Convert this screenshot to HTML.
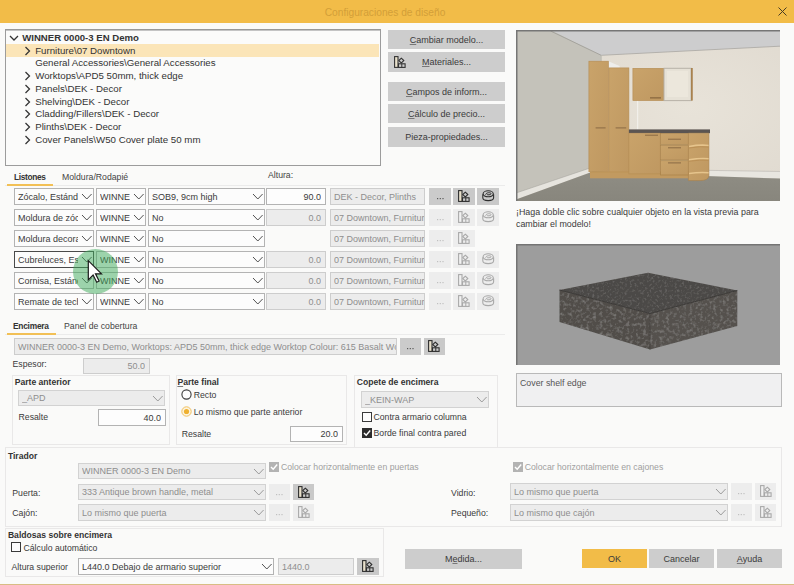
<!DOCTYPE html><html><head><meta charset="utf-8"><style>
html,body{margin:0;padding:0;}
body{width:794px;height:585px;position:relative;overflow:hidden;background:#fafaf9;font-family:"Liberation Sans", sans-serif;}
u{text-decoration:underline;text-decoration-color:#777;text-underline-offset:0.8px;text-decoration-thickness:1px;}
</style></head><body>
<div style="position:absolute;left:0px;top:0px;width:794px;height:23px;box-sizing:border-box;background:#f2bc48;"></div>
<div style="position:absolute;left:324.7px;top:7.06px;line-height:11.73px;font-size:10.2px;font-weight:normal;color:#d39f38;white-space:nowrap;">Configuraciones de diseño</div>
<svg style="position:absolute;left:777.5px;top:6.5px" width="9" height="9"><path d="M0.5 0.5 L8.5 8.5 M8.5 0.5 L0.5 8.5" stroke="#4a3d22" stroke-width="1"/></svg>
<div style="position:absolute;left:5px;top:29px;width:376px;height:137px;box-sizing:border-box;background:#fbfbfa;border:1px solid #9c9c9c;border-top:1px solid #999;box-shadow:inset 0 1px 0 #c4c4c4;"></div>
<div style="position:absolute;left:6px;top:44px;width:373px;height:12.5px;box-sizing:border-box;background:#fbe5b8;"></div>
<div style="position:absolute;left:22.2px;top:32.11px;line-height:11.04px;font-size:9.6px;font-weight:bold;color:#333;white-space:nowrap;">WINNER 0000-3 EN Demo</div>
<svg style="position:absolute;left:9px;top:34.5px" width="11" height="7"><polyline points="1,1 5,5 9,1" fill="none" stroke="#333" stroke-width="1.25"/></svg>
<div style="position:absolute;left:35.2px;top:44.72px;line-height:11.15px;font-size:9.7px;font-weight:normal;color:#333;white-space:nowrap;">Furniture\07 Downtown</div>
<svg style="position:absolute;left:24px;top:45.7px" width="8" height="10"><polyline points="1.5,1 5.5,5 1.5,9" fill="none" stroke="#333" stroke-width="1.25"/></svg>
<div style="position:absolute;left:35.2px;top:57.42px;line-height:11.15px;font-size:9.7px;font-weight:normal;color:#333;white-space:nowrap;">General Accessories\General Accessories</div>
<div style="position:absolute;left:35.2px;top:70.12px;line-height:11.15px;font-size:9.7px;font-weight:normal;color:#333;white-space:nowrap;">Worktops\APD5 50mm, thick edge</div>
<svg style="position:absolute;left:24px;top:71.1px" width="8" height="10"><polyline points="1.5,1 5.5,5 1.5,9" fill="none" stroke="#333" stroke-width="1.25"/></svg>
<div style="position:absolute;left:35.2px;top:82.82px;line-height:11.15px;font-size:9.7px;font-weight:normal;color:#333;white-space:nowrap;">Panels\DEK - Decor</div>
<svg style="position:absolute;left:24px;top:83.8px" width="8" height="10"><polyline points="1.5,1 5.5,5 1.5,9" fill="none" stroke="#333" stroke-width="1.25"/></svg>
<div style="position:absolute;left:35.2px;top:95.52px;line-height:11.15px;font-size:9.7px;font-weight:normal;color:#333;white-space:nowrap;">Shelving\DEK - Decor</div>
<svg style="position:absolute;left:24px;top:96.5px" width="8" height="10"><polyline points="1.5,1 5.5,5 1.5,9" fill="none" stroke="#333" stroke-width="1.25"/></svg>
<div style="position:absolute;left:35.2px;top:108.22px;line-height:11.15px;font-size:9.7px;font-weight:normal;color:#333;white-space:nowrap;">Cladding/Fillers\DEK - Decor</div>
<svg style="position:absolute;left:24px;top:109.2px" width="8" height="10"><polyline points="1.5,1 5.5,5 1.5,9" fill="none" stroke="#333" stroke-width="1.25"/></svg>
<div style="position:absolute;left:35.2px;top:120.92px;line-height:11.15px;font-size:9.7px;font-weight:normal;color:#333;white-space:nowrap;">Plinths\DEK - Decor</div>
<svg style="position:absolute;left:24px;top:121.9px" width="8" height="10"><polyline points="1.5,1 5.5,5 1.5,9" fill="none" stroke="#333" stroke-width="1.25"/></svg>
<div style="position:absolute;left:35.2px;top:133.62px;line-height:11.15px;font-size:9.7px;font-weight:normal;color:#333;white-space:nowrap;">Cover Panels\W50 Cover plate 50 mm</div>
<svg style="position:absolute;left:24px;top:134.6px" width="8" height="10"><polyline points="1.5,1 5.5,5 1.5,9" fill="none" stroke="#333" stroke-width="1.25"/></svg>
<div style="position:absolute;left:388px;top:30px;width:117px;height:19px;box-sizing:border-box;background:#cdcdcd;"></div>
<div style="position:absolute;left:388px;width:117px;text-align:center;top:34.59px;line-height:10.35px;font-size:9px;font-weight:normal;color:#3b3b3b;white-space:nowrap;"><u>C</u>ambiar modelo...</div>
<div style="position:absolute;left:388px;top:52px;width:117px;height:20px;box-sizing:border-box;background:#cdcdcd;"></div>
<div style="position:absolute;left:388px;width:117px;text-align:center;top:57.09px;line-height:10.35px;font-size:9px;font-weight:normal;color:#3b3b3b;white-space:nowrap;"><u>M</u>ateriales...</div>
<svg style="position:absolute;left:394px;top:55.5px" width="13" height="13" viewBox="0 0 13 13">
<rect x="0.6" y="0.6" width="3.4" height="10.8" fill="#eae2cc" stroke="#333" stroke-width="1.1"/>
<path d="M7.3 2.2 L9.8 4.6 L7.3 7 L4.8 4.6 Z" fill="none" stroke="#333" stroke-width="1.1"/>
<rect x="4.5" y="7.8" width="6.6" height="3.6" fill="none" stroke="#333" stroke-width="1.1"/>
<line x1="7.8" y1="7.8" x2="7.8" y2="11.4" stroke="#333" stroke-width="1"/>
</svg>
<div style="position:absolute;left:388px;top:82px;width:117px;height:19px;box-sizing:border-box;background:#cdcdcd;"></div>
<div style="position:absolute;left:388px;width:117px;text-align:center;top:86.59px;line-height:10.35px;font-size:9px;font-weight:normal;color:#3b3b3b;white-space:nowrap;"><u>C</u>ampos de inform...</div>
<div style="position:absolute;left:388px;top:104px;width:117px;height:19px;box-sizing:border-box;background:#cdcdcd;"></div>
<div style="position:absolute;left:388px;width:117px;text-align:center;top:108.59px;line-height:10.35px;font-size:9px;font-weight:normal;color:#3b3b3b;white-space:nowrap;"><u>C</u>álculo de precio...</div>
<div style="position:absolute;left:388px;top:127px;width:117px;height:19.5px;box-sizing:border-box;background:#cdcdcd;"></div>
<div style="position:absolute;left:388px;width:117px;text-align:center;top:131.84px;line-height:10.35px;font-size:9px;font-weight:normal;color:#3b3b3b;white-space:nowrap;">Pieza-propiedades...</div>
<svg style="position:absolute;left:516px;top:30px" width="264" height="171" viewBox="516 30 264 171">
<defs>
<linearGradient id="wood" x1="0" y1="0" x2="1" y2="1"><stop offset="0" stop-color="#c9a36a"/><stop offset="1" stop-color="#bf9861"/></linearGradient>
<linearGradient id="floor" x1="0" y1="0" x2="0" y2="1"><stop offset="0" stop-color="#8f8d84"/><stop offset="1" stop-color="#88867d"/></linearGradient>
<radialGradient id="bw" cx="0.65" cy="0.45" r="0.6"><stop offset="0" stop-color="#e8e3d9"/><stop offset="1" stop-color="#e0dad0"/></radialGradient>
</defs>
<rect x="516" y="30" width="264" height="171" fill="url(#bw)"/>
<polygon points="550.6,31 780,31 780,46.2 601.2,55.3" fill="#cdcdce"/>
<line x1="601.2" y1="55.3" x2="780" y2="46.2" stroke="#a9a7a2" stroke-width="0.8"/>
<polygon points="516,30 550.6,30 601.2,55.3 601.2,168 590,170.7 516,196" fill="#c4c2ba"/>
<line x1="550.6" y1="31" x2="601.2" y2="55.3" stroke="#9c9a96" stroke-width="0.8"/>
<line x1="601.2" y1="55.3" x2="601.2" y2="62" stroke="#b8b6b0" stroke-width="0.8"/>
<polygon points="516,193 590,168 593,171.5 516,199.5" fill="#e6e4de"/>
<line x1="516" y1="193" x2="590" y2="168" stroke="#a8a6a0" stroke-width="0.6"/>
<polygon points="705,170.3 780,171.5 780,178.5 705,176" fill="#e8e6e0"/>
<line x1="705" y1="170.3" x2="780" y2="171.5" stroke="#b8b6b0" stroke-width="0.6"/>
<polygon points="516,199.5 593,171.5 705,176 780,178.5 780,201 516,201" fill="url(#floor)"/>
<line x1="637.7" y1="100" x2="637.7" y2="129.5" stroke="#f4f3ef" stroke-width="1"/>
<polygon points="608.4,61.2 619.6,66 619.6,68 608.4,68" fill="#eeeeec"/>
<rect x="588.9" y="61.2" width="19.5" height="110.5" fill="url(#wood)" stroke="#b58c52" stroke-width="0.6"/>
<rect x="608.9" y="67.9" width="20" height="104.9" fill="url(#wood)" stroke="#b58c52" stroke-width="0.6"/>
<rect x="595.6" y="127.4" width="10" height="1" fill="#8a6a44"/>
<rect x="615.6" y="127.4" width="10.6" height="1" fill="#8a6a44"/>
<rect x="632.9" y="68.3" width="31.1" height="32.3" fill="url(#wood)" stroke="#b58c52" stroke-width="0.6"/>
<rect x="664" y="68.3" width="27.1" height="32.3" fill="#e6e1d6" stroke="#b7b2a8" stroke-width="1"/>
<rect x="667" y="71" width="21" height="26" fill="#ece7dc"/>
<rect x="691.1" y="68" width="1.6" height="32.6" fill="#a47a44"/>
<rect x="650" y="97.4" width="11" height="1" fill="#7a5a36"/>
<rect x="590" y="171.7" width="116" height="6.6" fill="#c29a60"/>
<line x1="590" y1="172" x2="706" y2="172" stroke="#b89050" stroke-width="0.6"/>
<rect x="628.9" y="129.4" width="81.1" height="3.8" fill="#5b5552"/>
<rect x="628.9" y="133.2" width="31.3" height="40.7" fill="url(#wood)" stroke="#b58c52" stroke-width="0.6"/>
<rect x="645" y="134.7" width="13" height="1" fill="#8a6a44"/>
<rect x="660.6" y="133.5" width="27.8" height="11" fill="url(#wood)" stroke="#a98249" stroke-width="0.7"/>
<rect x="660.6" y="145.3" width="27.8" height="14.6" fill="url(#wood)" stroke="#a98249" stroke-width="0.7"/>
<rect x="660.6" y="160.7" width="27.8" height="14.3" fill="url(#wood)" stroke="#a98249" stroke-width="0.7"/>
<rect x="668" y="138.7" width="13" height="1" fill="#8a6a44"/>
<rect x="668" y="147.3" width="13" height="1" fill="#8a6a44"/>
<rect x="668" y="162.4" width="13" height="1" fill="#8a6a44"/>
<path d="M688.4 133.2 L708.9 133.2 L708.9 176 Q708 180.6 700 180.6 L688.4 180.6 Z" fill="url(#wood)" stroke="#a98249" stroke-width="0.6"/>
<path d="M689 146.5 Q700 144.5 708.6 145.5 M689 159.8 Q700 158 708.6 158.8 M689 173.5 Q700 172 708.6 172.8" stroke="#e6c48c" stroke-width="1.6" fill="none"/>
<path d="M689 148 Q700 146 708.6 147 M689 161.3 Q700 159.5 708.6 160.3" stroke="#b88c50" stroke-width="0.8" fill="none"/>
<path d="M516.5 201 L516.5 30.5 L780 30.5" fill="none" stroke="#767676" stroke-width="2"/>
</svg>
<div style="position:absolute;left:516px;top:207.24px;line-height:10.23px;font-size:8.9px;font-weight:normal;color:#3b3b3b;white-space:nowrap;">¡Haga doble clic sobre cualquier objeto en la vista previa para</div>
<div style="position:absolute;left:516px;top:218.74px;line-height:10.23px;font-size:8.9px;font-weight:normal;color:#3b3b3b;white-space:nowrap;">cambiar el modelo!</div>
<svg style="position:absolute;left:516px;top:244px" width="264" height="121" viewBox="516 244 264 121">
<defs>
<filter id="stone" x="0" y="0" width="100%" height="100%">
<feTurbulence type="fractalNoise" baseFrequency="0.3" numOctaves="2" seed="4" result="n"/>
<feColorMatrix in="n" type="matrix" values="0 0 0 0 0.44  0 0 0 0 0.43  0 0 0 0 0.42  0.8 0 0 0 -0.38" result="c"/>
<feComposite in="c" in2="SourceGraphic" operator="in" result="t"/>
<feMerge><feMergeNode in="SourceGraphic"/><feMergeNode in="t"/></feMerge>
</filter>
<filter id="stone2" x="0" y="0" width="100%" height="100%">
<feTurbulence type="fractalNoise" baseFrequency="0.4" numOctaves="2" seed="9" result="n"/>
<feColorMatrix in="n" type="matrix" values="0 0 0 0 0.38  0 0 0 0 0.37  0 0 0 0 0.36  0.6 0 0 0 -0.3" result="c"/>
<feComposite in="c" in2="SourceGraphic" operator="in" result="t"/>
<feMerge><feMergeNode in="SourceGraphic"/><feMergeNode in="t"/></feMerge>
</filter>
</defs>
<rect x="516" y="244" width="264" height="121" fill="#9d9d9d"/>
<polygon points="559.5,290 648,272.7 737.3,290.5 650,313.5" fill="#4c4946" filter="url(#stone2)"/>
<g filter="url(#stone)">
<polygon points="559.5,290 650,313.5 650,349.5 559.5,322" fill="#514e4a"/>
<polygon points="650,313.5 737.3,290.5 737.3,326 650,349.5" fill="#54514d"/>
</g>
<line x1="650" y1="313.5" x2="650" y2="349.5" stroke="#3f3d3a" stroke-width="0.6"/>
<line x1="559.5" y1="290" x2="650" y2="313.5" stroke="#383633" stroke-width="0.9"/>
<line x1="650" y1="313.5" x2="737.3" y2="290.5" stroke="#383633" stroke-width="0.9"/>
<path d="M516.5 365 L516.5 244.5 L780 244.5" fill="none" stroke="#747474" stroke-width="2"/>
</svg>
<div style="position:absolute;left:516px;top:373px;width:266px;height:34px;box-sizing:border-box;background:#f0f0f1;border:1px solid #b9b9b9;"></div>
<div style="position:absolute;left:520px;top:378.03px;line-height:10.12px;font-size:8.8px;font-weight:normal;color:#555;white-space:nowrap;">Cover shelf edge</div>
<div style="position:absolute;left:14px;top:172.99px;line-height:9.66px;font-size:8.4px;font-weight:bold;color:#333;white-space:nowrap;letter-spacing:-0.35px;">Listones</div>
<div style="position:absolute;left:62px;top:172.12px;line-height:10.00px;font-size:8.7px;font-weight:normal;color:#444;white-space:nowrap;">Moldura/Rodapié</div>
<div style="position:absolute;left:5px;top:185px;width:500px;height:1px;box-sizing:border-box;background:#ebebeb;"></div>
<div style="position:absolute;left:7px;top:184px;width:46px;height:2px;box-sizing:border-box;background:#f2c056;"></div>
<div style="position:absolute;left:268px;top:170.12px;line-height:10.00px;font-size:8.7px;font-weight:normal;color:#444;white-space:nowrap;">Altura:</div>
<div style="position:absolute;left:14px;top:188px;width:80px;height:17px;box-sizing:border-box;background:#fcfcfc;border:1px solid #b3b3b3;"></div>
<div style="position:absolute;left:18px;top:189px;width:60px;height:15px;overflow:hidden;"></div>
<div style="position:absolute;left:18px;top:191.59px;width:60px;overflow:hidden;line-height:10.35px;font-size:9px;color:#3b3b3b;white-space:nowrap;">Zócalo, Estándar</div>
<svg style="position:absolute;left:80.6px;top:193.0px" width="11.6" height="7.0"><polyline points="1,1 5.8,6.0 10.6,1" fill="none" stroke="#505050" stroke-width="1.0"/></svg>
<div style="position:absolute;left:96px;top:188px;width:50px;height:17px;box-sizing:border-box;background:#fcfcfc;border:1px solid #b3b3b3;"></div>
<div style="position:absolute;left:100px;top:189px;width:30px;height:15px;overflow:hidden;"></div>
<div style="position:absolute;left:100px;top:191.59px;width:30px;overflow:hidden;line-height:10.35px;font-size:9px;color:#3b3b3b;white-space:nowrap;">WINNE</div>
<svg style="position:absolute;left:132.6px;top:193.0px" width="11.6" height="7.0"><polyline points="1,1 5.8,6.0 10.6,1" fill="none" stroke="#505050" stroke-width="1.0"/></svg>
<div style="position:absolute;left:148px;top:188px;width:117px;height:17px;box-sizing:border-box;background:#fcfcfc;border:1px solid #b3b3b3;"></div>
<div style="position:absolute;left:152px;top:189px;width:97px;height:15px;overflow:hidden;"></div>
<div style="position:absolute;left:152px;top:191.59px;width:97px;overflow:hidden;line-height:10.35px;font-size:9px;color:#3b3b3b;white-space:nowrap;">SOB9, 9cm high</div>
<svg style="position:absolute;left:251.6px;top:193.0px" width="11.6" height="7.0"><polyline points="1,1 5.8,6.0 10.6,1" fill="none" stroke="#505050" stroke-width="1.0"/></svg>
<div style="position:absolute;left:266px;top:188px;width:60px;height:17px;box-sizing:border-box;background:#fdfdfd;border:1px solid #b3b3b3;"></div>
<div style="position:absolute;left:268px;width:53px;text-align:right;top:191.59px;line-height:10.35px;font-size:9px;color:#3b3b3b;white-space:nowrap;overflow:hidden">90.0</div>
<div style="position:absolute;left:330px;top:188px;width:95px;height:17px;box-sizing:border-box;background:#ececec;border:1px solid #cdcdcd;"></div>
<div style="position:absolute;left:334px;width:90px;top:191.59px;line-height:10.35px;font-size:9px;color:#8e8e8e;white-space:nowrap;overflow:hidden">DEK - Decor, Plinths</div>
<div style="position:absolute;left:429px;top:188px;width:22px;height:17px;box-sizing:border-box;background:#cbcbcb;"></div>
<svg style="position:absolute;left:436.5px;top:198.0px" width="7" height="2"><rect x="0" y="0" width="1.2" height="1.2" fill="#5a5a5a"/><rect x="2.7" y="0" width="1.2" height="1.2" fill="#5a5a5a"/><rect x="5.4" y="0" width="1.2" height="1.2" fill="#5a5a5a"/></svg>
<div style="position:absolute;left:453px;top:188px;width:22px;height:17px;box-sizing:border-box;background:#c9c9c9;"></div>
<svg style="position:absolute;left:458px;top:190px" width="13" height="13" viewBox="0 0 13 13">
<rect x="0.6" y="0.6" width="3.4" height="10.8" fill="#e9e1cc" stroke="#2e2e2e" stroke-width="1.1"/>
<path d="M7.3 2.2 L9.8 4.6 L7.3 7 L4.8 4.6 Z" fill="none" stroke="#2e2e2e" stroke-width="1.1"/>
<rect x="4.5" y="7.8" width="6.6" height="3.6" fill="none" stroke="#2e2e2e" stroke-width="1.1"/>
<line x1="7.8" y1="7.8" x2="7.8" y2="11.4" stroke="#2e2e2e" stroke-width="1"/>
</svg>
<div style="position:absolute;left:477px;top:188px;width:22px;height:17px;box-sizing:border-box;background:#c9c9c9;"></div>
<svg style="position:absolute;left:482px;top:190px" width="13" height="12" viewBox="0 0 13 12">
<path d="M0.8 4.2 L0.8 7.8 C0.8 9.6 3.2 10.6 6.2 10.6 C9.2 10.6 11.6 9.6 11.6 7.8 L11.6 4.2" fill="none" stroke="#2e2e2e" stroke-width="1.1"/>
<ellipse cx="6.2" cy="3.8" rx="5.1" ry="3.0" fill="none" stroke="#2e2e2e" stroke-width="1.1"/>
<path d="M3.5 4.6 C4.5 2.2 8.8 2.2 9.2 3.8 C8.5 5.0 5.5 5.2 4.8 4.3" fill="none" stroke="#2e2e2e" stroke-width="1"/>
</svg>
<div style="position:absolute;left:14px;top:209px;width:80px;height:17px;box-sizing:border-box;background:#fcfcfc;border:1px solid #b3b3b3;"></div>
<div style="position:absolute;left:18px;top:210px;width:60px;height:15px;overflow:hidden;"></div>
<div style="position:absolute;left:18px;top:212.59px;width:60px;overflow:hidden;line-height:10.35px;font-size:9px;color:#3b3b3b;white-space:nowrap;">Moldura de zócalo</div>
<svg style="position:absolute;left:80.6px;top:214.0px" width="11.6" height="7.0"><polyline points="1,1 5.8,6.0 10.6,1" fill="none" stroke="#505050" stroke-width="1.0"/></svg>
<div style="position:absolute;left:96px;top:209px;width:50px;height:17px;box-sizing:border-box;background:#fcfcfc;border:1px solid #b3b3b3;"></div>
<div style="position:absolute;left:100px;top:210px;width:30px;height:15px;overflow:hidden;"></div>
<div style="position:absolute;left:100px;top:212.59px;width:30px;overflow:hidden;line-height:10.35px;font-size:9px;color:#3b3b3b;white-space:nowrap;">WINNE</div>
<svg style="position:absolute;left:132.6px;top:214.0px" width="11.6" height="7.0"><polyline points="1,1 5.8,6.0 10.6,1" fill="none" stroke="#505050" stroke-width="1.0"/></svg>
<div style="position:absolute;left:148px;top:209px;width:117px;height:17px;box-sizing:border-box;background:#fcfcfc;border:1px solid #b3b3b3;"></div>
<div style="position:absolute;left:152px;top:210px;width:97px;height:15px;overflow:hidden;"></div>
<div style="position:absolute;left:152px;top:212.59px;width:97px;overflow:hidden;line-height:10.35px;font-size:9px;color:#3b3b3b;white-space:nowrap;">No</div>
<svg style="position:absolute;left:251.6px;top:214.0px" width="11.6" height="7.0"><polyline points="1,1 5.8,6.0 10.6,1" fill="none" stroke="#505050" stroke-width="1.0"/></svg>
<div style="position:absolute;left:266px;top:209px;width:60px;height:17px;box-sizing:border-box;background:#ececec;border:1px solid #cdcdcd;"></div>
<div style="position:absolute;left:268px;width:53px;text-align:right;top:212.59px;line-height:10.35px;font-size:9px;color:#8e8e8e;white-space:nowrap;overflow:hidden">0.0</div>
<div style="position:absolute;left:330px;top:209px;width:95px;height:17px;box-sizing:border-box;background:#ececec;border:1px solid #cdcdcd;"></div>
<div style="position:absolute;left:334px;width:90px;top:212.59px;line-height:10.35px;font-size:9px;color:#8e8e8e;white-space:nowrap;overflow:hidden">07 Downtown, Furniture</div>
<div style="position:absolute;left:429px;top:209px;width:22px;height:17px;box-sizing:border-box;background:#ededed;"></div>
<svg style="position:absolute;left:436.5px;top:219.0px" width="7" height="2"><rect x="0" y="0" width="1.2" height="1.2" fill="#c0c0c0"/><rect x="2.7" y="0" width="1.2" height="1.2" fill="#c0c0c0"/><rect x="5.4" y="0" width="1.2" height="1.2" fill="#c0c0c0"/></svg>
<div style="position:absolute;left:453px;top:209px;width:22px;height:17px;box-sizing:border-box;background:#ededed;"></div>
<svg style="position:absolute;left:458px;top:211px" width="13" height="13" viewBox="0 0 13 13">
<rect x="0.6" y="0.6" width="3.4" height="10.8" fill="#f2f2f2" stroke="#a9a9a9" stroke-width="1.1"/>
<path d="M7.3 2.2 L9.8 4.6 L7.3 7 L4.8 4.6 Z" fill="none" stroke="#a9a9a9" stroke-width="1.1"/>
<rect x="4.5" y="7.8" width="6.6" height="3.6" fill="none" stroke="#a9a9a9" stroke-width="1.1"/>
<line x1="7.8" y1="7.8" x2="7.8" y2="11.4" stroke="#a9a9a9" stroke-width="1"/>
</svg>
<div style="position:absolute;left:477px;top:209px;width:22px;height:17px;box-sizing:border-box;background:#ededed;"></div>
<svg style="position:absolute;left:482px;top:211px" width="13" height="12" viewBox="0 0 13 12">
<path d="M0.8 4.2 L0.8 7.8 C0.8 9.6 3.2 10.6 6.2 10.6 C9.2 10.6 11.6 9.6 11.6 7.8 L11.6 4.2" fill="none" stroke="#a9a9a9" stroke-width="1.1"/>
<ellipse cx="6.2" cy="3.8" rx="5.1" ry="3.0" fill="none" stroke="#a9a9a9" stroke-width="1.1"/>
<path d="M3.5 4.6 C4.5 2.2 8.8 2.2 9.2 3.8 C8.5 5.0 5.5 5.2 4.8 4.3" fill="none" stroke="#a9a9a9" stroke-width="1"/>
</svg>
<div style="position:absolute;left:14px;top:230px;width:80px;height:17px;box-sizing:border-box;background:#fcfcfc;border:1px solid #b3b3b3;"></div>
<div style="position:absolute;left:18px;top:231px;width:60px;height:15px;overflow:hidden;"></div>
<div style="position:absolute;left:18px;top:233.59px;width:60px;overflow:hidden;line-height:10.35px;font-size:9px;color:#3b3b3b;white-space:nowrap;">Moldura decorativa</div>
<svg style="position:absolute;left:80.6px;top:235.0px" width="11.6" height="7.0"><polyline points="1,1 5.8,6.0 10.6,1" fill="none" stroke="#505050" stroke-width="1.0"/></svg>
<div style="position:absolute;left:96px;top:230px;width:50px;height:17px;box-sizing:border-box;background:#fcfcfc;border:1px solid #b3b3b3;"></div>
<div style="position:absolute;left:100px;top:231px;width:30px;height:15px;overflow:hidden;"></div>
<div style="position:absolute;left:100px;top:233.59px;width:30px;overflow:hidden;line-height:10.35px;font-size:9px;color:#3b3b3b;white-space:nowrap;">WINNE</div>
<svg style="position:absolute;left:132.6px;top:235.0px" width="11.6" height="7.0"><polyline points="1,1 5.8,6.0 10.6,1" fill="none" stroke="#505050" stroke-width="1.0"/></svg>
<div style="position:absolute;left:148px;top:230px;width:117px;height:17px;box-sizing:border-box;background:#fcfcfc;border:1px solid #b3b3b3;"></div>
<div style="position:absolute;left:152px;top:231px;width:97px;height:15px;overflow:hidden;"></div>
<div style="position:absolute;left:152px;top:233.59px;width:97px;overflow:hidden;line-height:10.35px;font-size:9px;color:#3b3b3b;white-space:nowrap;">No</div>
<svg style="position:absolute;left:251.6px;top:235.0px" width="11.6" height="7.0"><polyline points="1,1 5.8,6.0 10.6,1" fill="none" stroke="#505050" stroke-width="1.0"/></svg>
<div style="position:absolute;left:330px;top:230px;width:95px;height:17px;box-sizing:border-box;background:#ececec;border:1px solid #cdcdcd;"></div>
<div style="position:absolute;left:334px;width:90px;top:233.59px;line-height:10.35px;font-size:9px;color:#8e8e8e;white-space:nowrap;overflow:hidden">07 Downtown, Furniture</div>
<div style="position:absolute;left:429px;top:230px;width:22px;height:17px;box-sizing:border-box;background:#ededed;"></div>
<svg style="position:absolute;left:436.5px;top:240.0px" width="7" height="2"><rect x="0" y="0" width="1.2" height="1.2" fill="#c0c0c0"/><rect x="2.7" y="0" width="1.2" height="1.2" fill="#c0c0c0"/><rect x="5.4" y="0" width="1.2" height="1.2" fill="#c0c0c0"/></svg>
<div style="position:absolute;left:453px;top:230px;width:22px;height:17px;box-sizing:border-box;background:#ededed;"></div>
<svg style="position:absolute;left:458px;top:232px" width="13" height="13" viewBox="0 0 13 13">
<rect x="0.6" y="0.6" width="3.4" height="10.8" fill="#f2f2f2" stroke="#a9a9a9" stroke-width="1.1"/>
<path d="M7.3 2.2 L9.8 4.6 L7.3 7 L4.8 4.6 Z" fill="none" stroke="#a9a9a9" stroke-width="1.1"/>
<rect x="4.5" y="7.8" width="6.6" height="3.6" fill="none" stroke="#a9a9a9" stroke-width="1.1"/>
<line x1="7.8" y1="7.8" x2="7.8" y2="11.4" stroke="#a9a9a9" stroke-width="1"/>
</svg>
<div style="position:absolute;left:14px;top:251px;width:80px;height:17px;box-sizing:border-box;background:#fcfcfc;border:1px solid #4a4a4a;"></div>
<div style="position:absolute;left:18px;top:252px;width:60px;height:15px;overflow:hidden;"></div>
<div style="position:absolute;left:18px;top:254.59px;width:60px;overflow:hidden;line-height:10.35px;font-size:9px;color:#3b3b3b;white-space:nowrap;">Cubreluces, Estándar</div>
<svg style="position:absolute;left:80.6px;top:256.0px" width="11.6" height="7.0"><polyline points="1,1 5.8,6.0 10.6,1" fill="none" stroke="#505050" stroke-width="1.0"/></svg>
<div style="position:absolute;left:96px;top:251px;width:50px;height:17px;box-sizing:border-box;background:#fcfcfc;border:1px solid #b3b3b3;"></div>
<div style="position:absolute;left:100px;top:252px;width:30px;height:15px;overflow:hidden;"></div>
<div style="position:absolute;left:100px;top:254.59px;width:30px;overflow:hidden;line-height:10.35px;font-size:9px;color:#3b3b3b;white-space:nowrap;">WINNE</div>
<svg style="position:absolute;left:132.6px;top:256.0px" width="11.6" height="7.0"><polyline points="1,1 5.8,6.0 10.6,1" fill="none" stroke="#505050" stroke-width="1.0"/></svg>
<div style="position:absolute;left:148px;top:251px;width:117px;height:17px;box-sizing:border-box;background:#fcfcfc;border:1px solid #b3b3b3;"></div>
<div style="position:absolute;left:152px;top:252px;width:97px;height:15px;overflow:hidden;"></div>
<div style="position:absolute;left:152px;top:254.59px;width:97px;overflow:hidden;line-height:10.35px;font-size:9px;color:#3b3b3b;white-space:nowrap;">No</div>
<svg style="position:absolute;left:251.6px;top:256.0px" width="11.6" height="7.0"><polyline points="1,1 5.8,6.0 10.6,1" fill="none" stroke="#505050" stroke-width="1.0"/></svg>
<div style="position:absolute;left:266px;top:251px;width:60px;height:17px;box-sizing:border-box;background:#ececec;border:1px solid #cdcdcd;"></div>
<div style="position:absolute;left:268px;width:53px;text-align:right;top:254.59px;line-height:10.35px;font-size:9px;color:#8e8e8e;white-space:nowrap;overflow:hidden">0.0</div>
<div style="position:absolute;left:330px;top:251px;width:95px;height:17px;box-sizing:border-box;background:#ececec;border:1px solid #cdcdcd;"></div>
<div style="position:absolute;left:334px;width:90px;top:254.59px;line-height:10.35px;font-size:9px;color:#8e8e8e;white-space:nowrap;overflow:hidden">07 Downtown, Furniture</div>
<div style="position:absolute;left:429px;top:251px;width:22px;height:17px;box-sizing:border-box;background:#ededed;"></div>
<svg style="position:absolute;left:436.5px;top:261.0px" width="7" height="2"><rect x="0" y="0" width="1.2" height="1.2" fill="#c0c0c0"/><rect x="2.7" y="0" width="1.2" height="1.2" fill="#c0c0c0"/><rect x="5.4" y="0" width="1.2" height="1.2" fill="#c0c0c0"/></svg>
<div style="position:absolute;left:453px;top:251px;width:22px;height:17px;box-sizing:border-box;background:#ededed;"></div>
<svg style="position:absolute;left:458px;top:253px" width="13" height="13" viewBox="0 0 13 13">
<rect x="0.6" y="0.6" width="3.4" height="10.8" fill="#f2f2f2" stroke="#a9a9a9" stroke-width="1.1"/>
<path d="M7.3 2.2 L9.8 4.6 L7.3 7 L4.8 4.6 Z" fill="none" stroke="#a9a9a9" stroke-width="1.1"/>
<rect x="4.5" y="7.8" width="6.6" height="3.6" fill="none" stroke="#a9a9a9" stroke-width="1.1"/>
<line x1="7.8" y1="7.8" x2="7.8" y2="11.4" stroke="#a9a9a9" stroke-width="1"/>
</svg>
<div style="position:absolute;left:477px;top:251px;width:22px;height:17px;box-sizing:border-box;background:#ededed;"></div>
<svg style="position:absolute;left:482px;top:253px" width="13" height="12" viewBox="0 0 13 12">
<path d="M0.8 4.2 L0.8 7.8 C0.8 9.6 3.2 10.6 6.2 10.6 C9.2 10.6 11.6 9.6 11.6 7.8 L11.6 4.2" fill="none" stroke="#a9a9a9" stroke-width="1.1"/>
<ellipse cx="6.2" cy="3.8" rx="5.1" ry="3.0" fill="none" stroke="#a9a9a9" stroke-width="1.1"/>
<path d="M3.5 4.6 C4.5 2.2 8.8 2.2 9.2 3.8 C8.5 5.0 5.5 5.2 4.8 4.3" fill="none" stroke="#a9a9a9" stroke-width="1"/>
</svg>
<div style="position:absolute;left:14px;top:272px;width:80px;height:17px;box-sizing:border-box;background:#fcfcfc;border:1px solid #b3b3b3;"></div>
<div style="position:absolute;left:18px;top:273px;width:60px;height:15px;overflow:hidden;"></div>
<div style="position:absolute;left:18px;top:275.59px;width:60px;overflow:hidden;line-height:10.35px;font-size:9px;color:#3b3b3b;white-space:nowrap;">Cornisa, Estándar</div>
<svg style="position:absolute;left:80.6px;top:277.0px" width="11.6" height="7.0"><polyline points="1,1 5.8,6.0 10.6,1" fill="none" stroke="#505050" stroke-width="1.0"/></svg>
<div style="position:absolute;left:96px;top:272px;width:50px;height:17px;box-sizing:border-box;background:#fcfcfc;border:1px solid #b3b3b3;"></div>
<div style="position:absolute;left:100px;top:273px;width:30px;height:15px;overflow:hidden;"></div>
<div style="position:absolute;left:100px;top:275.59px;width:30px;overflow:hidden;line-height:10.35px;font-size:9px;color:#3b3b3b;white-space:nowrap;">WINNE</div>
<svg style="position:absolute;left:132.6px;top:277.0px" width="11.6" height="7.0"><polyline points="1,1 5.8,6.0 10.6,1" fill="none" stroke="#505050" stroke-width="1.0"/></svg>
<div style="position:absolute;left:148px;top:272px;width:117px;height:17px;box-sizing:border-box;background:#fcfcfc;border:1px solid #b3b3b3;"></div>
<div style="position:absolute;left:152px;top:273px;width:97px;height:15px;overflow:hidden;"></div>
<div style="position:absolute;left:152px;top:275.59px;width:97px;overflow:hidden;line-height:10.35px;font-size:9px;color:#3b3b3b;white-space:nowrap;">No</div>
<svg style="position:absolute;left:251.6px;top:277.0px" width="11.6" height="7.0"><polyline points="1,1 5.8,6.0 10.6,1" fill="none" stroke="#505050" stroke-width="1.0"/></svg>
<div style="position:absolute;left:266px;top:272px;width:60px;height:17px;box-sizing:border-box;background:#ececec;border:1px solid #cdcdcd;"></div>
<div style="position:absolute;left:268px;width:53px;text-align:right;top:275.59px;line-height:10.35px;font-size:9px;color:#8e8e8e;white-space:nowrap;overflow:hidden">0.0</div>
<div style="position:absolute;left:330px;top:272px;width:95px;height:17px;box-sizing:border-box;background:#ececec;border:1px solid #cdcdcd;"></div>
<div style="position:absolute;left:334px;width:90px;top:275.59px;line-height:10.35px;font-size:9px;color:#8e8e8e;white-space:nowrap;overflow:hidden">07 Downtown, Furniture</div>
<div style="position:absolute;left:429px;top:272px;width:22px;height:17px;box-sizing:border-box;background:#ededed;"></div>
<svg style="position:absolute;left:436.5px;top:282.0px" width="7" height="2"><rect x="0" y="0" width="1.2" height="1.2" fill="#c0c0c0"/><rect x="2.7" y="0" width="1.2" height="1.2" fill="#c0c0c0"/><rect x="5.4" y="0" width="1.2" height="1.2" fill="#c0c0c0"/></svg>
<div style="position:absolute;left:453px;top:272px;width:22px;height:17px;box-sizing:border-box;background:#ededed;"></div>
<svg style="position:absolute;left:458px;top:274px" width="13" height="13" viewBox="0 0 13 13">
<rect x="0.6" y="0.6" width="3.4" height="10.8" fill="#f2f2f2" stroke="#a9a9a9" stroke-width="1.1"/>
<path d="M7.3 2.2 L9.8 4.6 L7.3 7 L4.8 4.6 Z" fill="none" stroke="#a9a9a9" stroke-width="1.1"/>
<rect x="4.5" y="7.8" width="6.6" height="3.6" fill="none" stroke="#a9a9a9" stroke-width="1.1"/>
<line x1="7.8" y1="7.8" x2="7.8" y2="11.4" stroke="#a9a9a9" stroke-width="1"/>
</svg>
<div style="position:absolute;left:477px;top:272px;width:22px;height:17px;box-sizing:border-box;background:#ededed;"></div>
<svg style="position:absolute;left:482px;top:274px" width="13" height="12" viewBox="0 0 13 12">
<path d="M0.8 4.2 L0.8 7.8 C0.8 9.6 3.2 10.6 6.2 10.6 C9.2 10.6 11.6 9.6 11.6 7.8 L11.6 4.2" fill="none" stroke="#a9a9a9" stroke-width="1.1"/>
<ellipse cx="6.2" cy="3.8" rx="5.1" ry="3.0" fill="none" stroke="#a9a9a9" stroke-width="1.1"/>
<path d="M3.5 4.6 C4.5 2.2 8.8 2.2 9.2 3.8 C8.5 5.0 5.5 5.2 4.8 4.3" fill="none" stroke="#a9a9a9" stroke-width="1"/>
</svg>
<div style="position:absolute;left:14px;top:293px;width:80px;height:17px;box-sizing:border-box;background:#fcfcfc;border:1px solid #b3b3b3;"></div>
<div style="position:absolute;left:18px;top:294px;width:60px;height:15px;overflow:hidden;"></div>
<div style="position:absolute;left:18px;top:296.59px;width:60px;overflow:hidden;line-height:10.35px;font-size:9px;color:#3b3b3b;white-space:nowrap;">Remate de techo</div>
<svg style="position:absolute;left:80.6px;top:298.0px" width="11.6" height="7.0"><polyline points="1,1 5.8,6.0 10.6,1" fill="none" stroke="#505050" stroke-width="1.0"/></svg>
<div style="position:absolute;left:96px;top:293px;width:50px;height:17px;box-sizing:border-box;background:#fcfcfc;border:1px solid #b3b3b3;"></div>
<div style="position:absolute;left:100px;top:294px;width:30px;height:15px;overflow:hidden;"></div>
<div style="position:absolute;left:100px;top:296.59px;width:30px;overflow:hidden;line-height:10.35px;font-size:9px;color:#3b3b3b;white-space:nowrap;">WINNE</div>
<svg style="position:absolute;left:132.6px;top:298.0px" width="11.6" height="7.0"><polyline points="1,1 5.8,6.0 10.6,1" fill="none" stroke="#505050" stroke-width="1.0"/></svg>
<div style="position:absolute;left:148px;top:293px;width:117px;height:17px;box-sizing:border-box;background:#fcfcfc;border:1px solid #b3b3b3;"></div>
<div style="position:absolute;left:152px;top:294px;width:97px;height:15px;overflow:hidden;"></div>
<div style="position:absolute;left:152px;top:296.59px;width:97px;overflow:hidden;line-height:10.35px;font-size:9px;color:#3b3b3b;white-space:nowrap;">No</div>
<svg style="position:absolute;left:251.6px;top:298.0px" width="11.6" height="7.0"><polyline points="1,1 5.8,6.0 10.6,1" fill="none" stroke="#505050" stroke-width="1.0"/></svg>
<div style="position:absolute;left:266px;top:293px;width:60px;height:17px;box-sizing:border-box;background:#ececec;border:1px solid #cdcdcd;"></div>
<div style="position:absolute;left:268px;width:53px;text-align:right;top:296.59px;line-height:10.35px;font-size:9px;color:#8e8e8e;white-space:nowrap;overflow:hidden">0.0</div>
<div style="position:absolute;left:330px;top:293px;width:95px;height:17px;box-sizing:border-box;background:#ececec;border:1px solid #cdcdcd;"></div>
<div style="position:absolute;left:334px;width:90px;top:296.59px;line-height:10.35px;font-size:9px;color:#8e8e8e;white-space:nowrap;overflow:hidden">07 Downtown, Furniture</div>
<div style="position:absolute;left:429px;top:293px;width:22px;height:17px;box-sizing:border-box;background:#ededed;"></div>
<svg style="position:absolute;left:436.5px;top:303.0px" width="7" height="2"><rect x="0" y="0" width="1.2" height="1.2" fill="#c0c0c0"/><rect x="2.7" y="0" width="1.2" height="1.2" fill="#c0c0c0"/><rect x="5.4" y="0" width="1.2" height="1.2" fill="#c0c0c0"/></svg>
<div style="position:absolute;left:453px;top:293px;width:22px;height:17px;box-sizing:border-box;background:#ededed;"></div>
<svg style="position:absolute;left:458px;top:295px" width="13" height="13" viewBox="0 0 13 13">
<rect x="0.6" y="0.6" width="3.4" height="10.8" fill="#f2f2f2" stroke="#a9a9a9" stroke-width="1.1"/>
<path d="M7.3 2.2 L9.8 4.6 L7.3 7 L4.8 4.6 Z" fill="none" stroke="#a9a9a9" stroke-width="1.1"/>
<rect x="4.5" y="7.8" width="6.6" height="3.6" fill="none" stroke="#a9a9a9" stroke-width="1.1"/>
<line x1="7.8" y1="7.8" x2="7.8" y2="11.4" stroke="#a9a9a9" stroke-width="1"/>
</svg>
<div style="position:absolute;left:477px;top:293px;width:22px;height:17px;box-sizing:border-box;background:#ededed;"></div>
<svg style="position:absolute;left:482px;top:295px" width="13" height="12" viewBox="0 0 13 12">
<path d="M0.8 4.2 L0.8 7.8 C0.8 9.6 3.2 10.6 6.2 10.6 C9.2 10.6 11.6 9.6 11.6 7.8 L11.6 4.2" fill="none" stroke="#a9a9a9" stroke-width="1.1"/>
<ellipse cx="6.2" cy="3.8" rx="5.1" ry="3.0" fill="none" stroke="#a9a9a9" stroke-width="1.1"/>
<path d="M3.5 4.6 C4.5 2.2 8.8 2.2 9.2 3.8 C8.5 5.0 5.5 5.2 4.8 4.3" fill="none" stroke="#a9a9a9" stroke-width="1"/>
</svg>
<div style="position:absolute;left:13px;top:321.99px;line-height:9.66px;font-size:8.4px;font-weight:bold;color:#333;white-space:nowrap;letter-spacing:-0.25px;">Encimera</div>
<div style="position:absolute;left:64px;top:321.12px;line-height:10.00px;font-size:8.7px;font-weight:normal;color:#444;white-space:nowrap;">Panel de cobertura</div>
<div style="position:absolute;left:5px;top:333.5px;width:500px;height:1.0px;box-sizing:border-box;background:#ebebeb;"></div>
<div style="position:absolute;left:7px;top:333px;width:49px;height:2px;box-sizing:border-box;background:#f2c056;"></div>
<div style="position:absolute;left:14px;top:338px;width:383px;height:17px;box-sizing:border-box;background:#ececec;border:1px solid #cdcdcd;"></div>
<div style="position:absolute;left:18px;width:378px;top:341.59px;line-height:10.35px;font-size:9px;color:#8e8e8e;white-space:nowrap;overflow:hidden">WINNER 0000-3 EN Demo, Worktops: APD5 50mm, thick edge Worktop Colour: 615 Basalt Worktop</div>
<div style="position:absolute;left:400px;top:338px;width:21px;height:17px;box-sizing:border-box;background:#cbcbcb;"></div>
<svg style="position:absolute;left:407.0px;top:348.0px" width="7" height="2"><rect x="0" y="0" width="1.2" height="1.2" fill="#5a5a5a"/><rect x="2.7" y="0" width="1.2" height="1.2" fill="#5a5a5a"/><rect x="5.4" y="0" width="1.2" height="1.2" fill="#5a5a5a"/></svg>
<div style="position:absolute;left:424px;top:338px;width:21px;height:17px;box-sizing:border-box;background:#c9c9c9;"></div>
<svg style="position:absolute;left:428px;top:340px" width="13" height="13" viewBox="0 0 13 13">
<rect x="0.6" y="0.6" width="3.4" height="10.8" fill="#e9e1cc" stroke="#2e2e2e" stroke-width="1.1"/>
<path d="M7.3 2.2 L9.8 4.6 L7.3 7 L4.8 4.6 Z" fill="none" stroke="#2e2e2e" stroke-width="1.1"/>
<rect x="4.5" y="7.8" width="6.6" height="3.6" fill="none" stroke="#2e2e2e" stroke-width="1.1"/>
<line x1="7.8" y1="7.8" x2="7.8" y2="11.4" stroke="#2e2e2e" stroke-width="1"/>
</svg>
<div style="position:absolute;left:12.5px;top:359.12px;line-height:10.00px;font-size:8.7px;font-weight:normal;color:#3b3b3b;white-space:nowrap;">Espesor:</div>
<div style="position:absolute;left:83px;top:358px;width:67px;height:16px;box-sizing:border-box;background:#ececec;border:1px solid #cdcdcd;"></div>
<div style="position:absolute;left:85px;width:60px;text-align:right;top:361.09px;line-height:10.35px;font-size:9px;color:#8e8e8e;white-space:nowrap;overflow:hidden">50.0</div>
<div style="position:absolute;left:12px;top:375px;width:158px;height:70px;box-sizing:border-box;border:1px solid #e9e8e8;"></div>
<div style="position:absolute;left:14.7px;top:377.61px;line-height:9.89px;font-size:8.6px;font-weight:bold;color:#333;white-space:nowrap;">Parte anterior</div>
<div style="position:absolute;left:18px;top:390px;width:147px;height:16px;box-sizing:border-box;background:#ececec;border:1px solid #d2d2d2;"></div>
<div style="position:absolute;left:22px;top:391px;width:127px;height:14px;overflow:hidden;"></div>
<div style="position:absolute;left:22px;top:393.09px;width:127px;overflow:hidden;line-height:10.35px;font-size:9px;color:#8e8e8e;white-space:nowrap;">_APD</div>
<svg style="position:absolute;left:151.6px;top:394.5px" width="11.6" height="7.0"><polyline points="1,1 5.8,6.0 10.6,1" fill="none" stroke="#9a9a9a" stroke-width="1.0"/></svg>
<div style="position:absolute;left:18.6px;top:412.42px;line-height:10.00px;font-size:8.7px;font-weight:normal;color:#3b3b3b;white-space:nowrap;">Resalte</div>
<div style="position:absolute;left:98px;top:409px;width:68px;height:17px;box-sizing:border-box;background:#fdfdfd;border:1px solid #b3b3b3;"></div>
<div style="position:absolute;left:100px;width:61px;text-align:right;top:412.59px;line-height:10.35px;font-size:9px;color:#3b3b3b;white-space:nowrap;overflow:hidden">40.0</div>
<div style="position:absolute;left:176px;top:375px;width:171px;height:70px;box-sizing:border-box;border:1px solid #e9e8e8;"></div>
<div style="position:absolute;left:177.4px;top:377.71px;line-height:9.89px;font-size:8.6px;font-weight:bold;color:#333;white-space:nowrap;"><u>P</u>arte final</div>
<svg style="position:absolute;left:180.5px;top:388.9px" width="11" height="11"><circle cx="5.5" cy="5.5" r="4.6" fill="#fdfdfd" stroke="#3a3a3a" stroke-width="1.1"/></svg>
<div style="position:absolute;left:193.7px;top:389.72px;line-height:10.00px;font-size:8.7px;font-weight:normal;color:#3b3b3b;white-space:nowrap;">Recto</div>
<svg style="position:absolute;left:180.5px;top:406.4px" width="11" height="11"><circle cx="5.5" cy="5.5" r="4.7" fill="#fdf3dc" stroke="#f0c060" stroke-width="1"/><circle cx="5.5" cy="5.5" r="2.6" fill="#eeb030"/></svg>
<div style="position:absolute;left:193.7px;top:407.22px;line-height:10.00px;font-size:8.7px;font-weight:normal;color:#3b3b3b;white-space:nowrap;">Lo mismo que parte anterior</div>
<div style="position:absolute;left:181.7px;top:429.12px;line-height:10.00px;font-size:8.7px;font-weight:normal;color:#3b3b3b;white-space:nowrap;">Resalte</div>
<div style="position:absolute;left:290px;top:426px;width:53px;height:16px;box-sizing:border-box;background:#fdfdfd;border:1px solid #b3b3b3;"></div>
<div style="position:absolute;left:292px;width:46px;text-align:right;top:429.09px;line-height:10.35px;font-size:9px;color:#3b3b3b;white-space:nowrap;overflow:hidden">20.0</div>
<div style="position:absolute;left:354px;top:375px;width:144px;height:73px;box-sizing:border-box;border:1px solid #e9e8e8;"></div>
<div style="position:absolute;left:356.8px;top:378.21px;line-height:9.89px;font-size:8.6px;font-weight:bold;color:#333;white-space:nowrap;">Copete de encimera</div>
<div style="position:absolute;left:361px;top:391px;width:128px;height:17px;box-sizing:border-box;background:#ececec;border:1px solid #d2d2d2;"></div>
<div style="position:absolute;left:365px;top:392px;width:108px;height:15px;overflow:hidden;"></div>
<div style="position:absolute;left:365px;top:394.59px;width:108px;overflow:hidden;line-height:10.35px;font-size:9px;color:#8e8e8e;white-space:nowrap;">_KEIN-WAP</div>
<svg style="position:absolute;left:475.6px;top:396.0px" width="11.6" height="7.0"><polyline points="1,1 5.8,6.0 10.6,1" fill="none" stroke="#9a9a9a" stroke-width="1.0"/></svg>
<svg style="position:absolute;left:362px;top:412px" width="10" height="10"><rect x="0.5" y="0.5" width="9" height="9" fill="#fdfdfd" stroke="#3a3a3a" stroke-width="1"/></svg>
<div style="position:absolute;left:373.5px;top:412.32px;line-height:10.00px;font-size:8.7px;font-weight:normal;color:#3b3b3b;white-space:nowrap;">Contra armario columna</div>
<svg style="position:absolute;left:362px;top:427.5px" width="10" height="10"><rect x="0" y="0" width="10" height="10" fill="#2c2c2c"/><polyline points="2,5 4.2,7.3 8.2,2.5" fill="none" stroke="#fff" stroke-width="1.4"/></svg>
<div style="position:absolute;left:373.5px;top:427.82px;line-height:10.00px;font-size:8.7px;font-weight:normal;color:#3b3b3b;white-space:nowrap;">Borde final contra pared</div>
<div style="position:absolute;left:5px;top:447px;width:777px;height:80px;box-sizing:border-box;border:1px solid #e9e8e8;"></div>
<div style="position:absolute;left:7.9px;top:451.91px;line-height:9.89px;font-size:8.6px;font-weight:bold;color:#333;white-space:nowrap;">Tirador</div>
<div style="position:absolute;left:78px;top:463px;width:188px;height:16px;box-sizing:border-box;background:#ececec;border:1px solid #d2d2d2;"></div>
<div style="position:absolute;left:82px;top:464px;width:168px;height:14px;overflow:hidden;"></div>
<div style="position:absolute;left:82px;top:466.09px;width:168px;overflow:hidden;line-height:10.35px;font-size:9px;color:#8e8e8e;white-space:nowrap;">WINNER 0000-3 EN Demo</div>
<svg style="position:absolute;left:252.6px;top:467.5px" width="11.6" height="7.0"><polyline points="1,1 5.8,6.0 10.6,1" fill="none" stroke="#9a9a9a" stroke-width="1.0"/></svg>
<svg style="position:absolute;left:269px;top:462px" width="10" height="10"><rect x="0" y="0" width="10" height="10" fill="#b3b3b3"/><polyline points="2,5 4.2,7.3 8.2,2.5" fill="none" stroke="#fff" stroke-width="1.4"/></svg>
<div style="position:absolute;left:281px;top:462.32px;line-height:10.00px;font-size:8.7px;font-weight:normal;color:#a0a0a0;white-space:nowrap;">Colocar horizontalmente en puertas</div>
<div style="position:absolute;left:12.3px;top:487.62px;line-height:10.00px;font-size:8.7px;font-weight:normal;color:#3b3b3b;white-space:nowrap;">Puerta:</div>
<div style="position:absolute;left:78px;top:484px;width:188px;height:16px;box-sizing:border-box;background:#ececec;border:1px solid #d2d2d2;"></div>
<div style="position:absolute;left:82px;top:485px;width:168px;height:14px;overflow:hidden;"></div>
<div style="position:absolute;left:82px;top:487.09px;width:168px;overflow:hidden;line-height:10.35px;font-size:9px;color:#8e8e8e;white-space:nowrap;">333 Antique brown handle, metal</div>
<svg style="position:absolute;left:252.6px;top:488.5px" width="11.6" height="7.0"><polyline points="1,1 5.8,6.0 10.6,1" fill="none" stroke="#9a9a9a" stroke-width="1.0"/></svg>
<div style="position:absolute;left:269px;top:484px;width:21px;height:16px;box-sizing:border-box;background:#ededed;"></div>
<svg style="position:absolute;left:276.0px;top:493.5px" width="7" height="2"><rect x="0" y="0" width="1.2" height="1.2" fill="#c0c0c0"/><rect x="2.7" y="0" width="1.2" height="1.2" fill="#c0c0c0"/><rect x="5.4" y="0" width="1.2" height="1.2" fill="#c0c0c0"/></svg>
<div style="position:absolute;left:293px;top:484px;width:21px;height:16px;box-sizing:border-box;background:#c9c9c9;"></div>
<svg style="position:absolute;left:298px;top:486px" width="13" height="13" viewBox="0 0 13 13">
<rect x="0.6" y="0.6" width="3.4" height="10.8" fill="#e9e1cc" stroke="#2e2e2e" stroke-width="1.1"/>
<path d="M7.3 2.2 L9.8 4.6 L7.3 7 L4.8 4.6 Z" fill="none" stroke="#2e2e2e" stroke-width="1.1"/>
<rect x="4.5" y="7.8" width="6.6" height="3.6" fill="none" stroke="#2e2e2e" stroke-width="1.1"/>
<line x1="7.8" y1="7.8" x2="7.8" y2="11.4" stroke="#2e2e2e" stroke-width="1"/>
</svg>
<div style="position:absolute;left:12.3px;top:507.92px;line-height:10.00px;font-size:8.7px;font-weight:normal;color:#3b3b3b;white-space:nowrap;">Cajón:</div>
<div style="position:absolute;left:78px;top:504px;width:188px;height:17px;box-sizing:border-box;background:#ececec;border:1px solid #d2d2d2;"></div>
<div style="position:absolute;left:82px;top:505px;width:168px;height:15px;overflow:hidden;"></div>
<div style="position:absolute;left:82px;top:507.59px;width:168px;overflow:hidden;line-height:10.35px;font-size:9px;color:#8e8e8e;white-space:nowrap;">Lo mismo que puerta</div>
<svg style="position:absolute;left:252.6px;top:509.0px" width="11.6" height="7.0"><polyline points="1,1 5.8,6.0 10.6,1" fill="none" stroke="#9a9a9a" stroke-width="1.0"/></svg>
<div style="position:absolute;left:269px;top:504px;width:21px;height:17px;box-sizing:border-box;background:#ededed;"></div>
<svg style="position:absolute;left:276.0px;top:514.0px" width="7" height="2"><rect x="0" y="0" width="1.2" height="1.2" fill="#c0c0c0"/><rect x="2.7" y="0" width="1.2" height="1.2" fill="#c0c0c0"/><rect x="5.4" y="0" width="1.2" height="1.2" fill="#c0c0c0"/></svg>
<div style="position:absolute;left:293px;top:504px;width:21px;height:17px;box-sizing:border-box;background:#ededed;"></div>
<svg style="position:absolute;left:298px;top:506px" width="13" height="13" viewBox="0 0 13 13">
<rect x="0.6" y="0.6" width="3.4" height="10.8" fill="#f2f2f2" stroke="#a9a9a9" stroke-width="1.1"/>
<path d="M7.3 2.2 L9.8 4.6 L7.3 7 L4.8 4.6 Z" fill="none" stroke="#a9a9a9" stroke-width="1.1"/>
<rect x="4.5" y="7.8" width="6.6" height="3.6" fill="none" stroke="#a9a9a9" stroke-width="1.1"/>
<line x1="7.8" y1="7.8" x2="7.8" y2="11.4" stroke="#a9a9a9" stroke-width="1"/>
</svg>
<svg style="position:absolute;left:513px;top:462px" width="10" height="10"><rect x="0" y="0" width="10" height="10" fill="#b3b3b3"/><polyline points="2,5 4.2,7.3 8.2,2.5" fill="none" stroke="#fff" stroke-width="1.4"/></svg>
<div style="position:absolute;left:524.7px;top:462.32px;line-height:10.00px;font-size:8.7px;font-weight:normal;color:#a0a0a0;white-space:nowrap;">Colocar horizontalmente en cajones</div>
<div style="position:absolute;left:451px;top:487.52px;line-height:10.00px;font-size:8.7px;font-weight:normal;color:#3b3b3b;white-space:nowrap;">Vidrio:</div>
<div style="position:absolute;left:510px;top:483px;width:218px;height:17px;box-sizing:border-box;background:#ececec;border:1px solid #d2d2d2;"></div>
<div style="position:absolute;left:514px;top:484px;width:198px;height:15px;overflow:hidden;"></div>
<div style="position:absolute;left:514px;top:486.59px;width:198px;overflow:hidden;line-height:10.35px;font-size:9px;color:#8e8e8e;white-space:nowrap;">Lo mismo que puerta</div>
<svg style="position:absolute;left:714.6px;top:488.0px" width="11.6" height="7.0"><polyline points="1,1 5.8,6.0 10.6,1" fill="none" stroke="#9a9a9a" stroke-width="1.0"/></svg>
<div style="position:absolute;left:731px;top:483px;width:21px;height:17px;box-sizing:border-box;background:#ededed;"></div>
<svg style="position:absolute;left:738.0px;top:493.0px" width="7" height="2"><rect x="0" y="0" width="1.2" height="1.2" fill="#c0c0c0"/><rect x="2.7" y="0" width="1.2" height="1.2" fill="#c0c0c0"/><rect x="5.4" y="0" width="1.2" height="1.2" fill="#c0c0c0"/></svg>
<div style="position:absolute;left:755px;top:483px;width:21px;height:17px;box-sizing:border-box;background:#ededed;"></div>
<svg style="position:absolute;left:760px;top:485px" width="13" height="13" viewBox="0 0 13 13">
<rect x="0.6" y="0.6" width="3.4" height="10.8" fill="#f2f2f2" stroke="#a9a9a9" stroke-width="1.1"/>
<path d="M7.3 2.2 L9.8 4.6 L7.3 7 L4.8 4.6 Z" fill="none" stroke="#a9a9a9" stroke-width="1.1"/>
<rect x="4.5" y="7.8" width="6.6" height="3.6" fill="none" stroke="#a9a9a9" stroke-width="1.1"/>
<line x1="7.8" y1="7.8" x2="7.8" y2="11.4" stroke="#a9a9a9" stroke-width="1"/>
</svg>
<div style="position:absolute;left:451px;top:507.62px;line-height:10.00px;font-size:8.7px;font-weight:normal;color:#3b3b3b;white-space:nowrap;">Pequeño:</div>
<div style="position:absolute;left:510px;top:504px;width:218px;height:17px;box-sizing:border-box;background:#ececec;border:1px solid #d2d2d2;"></div>
<div style="position:absolute;left:514px;top:505px;width:198px;height:15px;overflow:hidden;"></div>
<div style="position:absolute;left:514px;top:507.59px;width:198px;overflow:hidden;line-height:10.35px;font-size:9px;color:#8e8e8e;white-space:nowrap;">Lo mismo que cajón</div>
<svg style="position:absolute;left:714.6px;top:509.0px" width="11.6" height="7.0"><polyline points="1,1 5.8,6.0 10.6,1" fill="none" stroke="#9a9a9a" stroke-width="1.0"/></svg>
<div style="position:absolute;left:731px;top:504px;width:21px;height:17px;box-sizing:border-box;background:#ededed;"></div>
<svg style="position:absolute;left:738.0px;top:514.0px" width="7" height="2"><rect x="0" y="0" width="1.2" height="1.2" fill="#c0c0c0"/><rect x="2.7" y="0" width="1.2" height="1.2" fill="#c0c0c0"/><rect x="5.4" y="0" width="1.2" height="1.2" fill="#c0c0c0"/></svg>
<div style="position:absolute;left:755px;top:504px;width:21px;height:17px;box-sizing:border-box;background:#ededed;"></div>
<svg style="position:absolute;left:760px;top:506px" width="13" height="13" viewBox="0 0 13 13">
<rect x="0.6" y="0.6" width="3.4" height="10.8" fill="#f2f2f2" stroke="#a9a9a9" stroke-width="1.1"/>
<path d="M7.3 2.2 L9.8 4.6 L7.3 7 L4.8 4.6 Z" fill="none" stroke="#a9a9a9" stroke-width="1.1"/>
<rect x="4.5" y="7.8" width="6.6" height="3.6" fill="none" stroke="#a9a9a9" stroke-width="1.1"/>
<line x1="7.8" y1="7.8" x2="7.8" y2="11.4" stroke="#a9a9a9" stroke-width="1"/>
</svg>
<div style="position:absolute;left:5px;top:528px;width:379px;height:49px;box-sizing:border-box;border:1px solid #e9e8e8;"></div>
<div style="position:absolute;left:7.9px;top:530.71px;line-height:9.89px;font-size:8.6px;font-weight:bold;color:#333;white-space:nowrap;">Baldosas sobre encimera</div>
<svg style="position:absolute;left:11px;top:542px" width="10" height="10"><rect x="0.5" y="0.5" width="9" height="9" fill="#fdfdfd" stroke="#3a3a3a" stroke-width="1"/></svg>
<div style="position:absolute;left:23.5px;top:542.62px;line-height:10.00px;font-size:8.7px;font-weight:normal;color:#3b3b3b;white-space:nowrap;">Cálculo automático</div>
<div style="position:absolute;left:11.5px;top:562.42px;line-height:10.00px;font-size:8.7px;font-weight:normal;color:#3b3b3b;white-space:nowrap;">Altura superior</div>
<div style="position:absolute;left:78px;top:558px;width:196px;height:17px;box-sizing:border-box;background:#fcfcfc;border:1px solid #b3b3b3;"></div>
<div style="position:absolute;left:82px;top:559px;width:176px;height:15px;overflow:hidden;"></div>
<div style="position:absolute;left:82px;top:561.59px;width:176px;overflow:hidden;line-height:10.35px;font-size:9px;color:#3b3b3b;white-space:nowrap;">L440.0 Debajo de armario superior</div>
<svg style="position:absolute;left:260.6px;top:563.0px" width="11.6" height="7.0"><polyline points="1,1 5.8,6.0 10.6,1" fill="none" stroke="#505050" stroke-width="1.0"/></svg>
<div style="position:absolute;left:278px;top:558px;width:76px;height:17px;box-sizing:border-box;background:#ececec;border:1px solid #cdcdcd;"></div>
<div style="position:absolute;left:282px;width:71px;top:561.59px;line-height:10.35px;font-size:9px;color:#8e8e8e;white-space:nowrap;overflow:hidden">1440.0</div>
<div style="position:absolute;left:357px;top:558px;width:22px;height:17px;box-sizing:border-box;background:#c9c9c9;"></div>
<svg style="position:absolute;left:362px;top:560px" width="13" height="13" viewBox="0 0 13 13">
<rect x="0.6" y="0.6" width="3.4" height="10.8" fill="#e9e1cc" stroke="#2e2e2e" stroke-width="1.1"/>
<path d="M7.3 2.2 L9.8 4.6 L7.3 7 L4.8 4.6 Z" fill="none" stroke="#2e2e2e" stroke-width="1.1"/>
<rect x="4.5" y="7.8" width="6.6" height="3.6" fill="none" stroke="#2e2e2e" stroke-width="1.1"/>
<line x1="7.8" y1="7.8" x2="7.8" y2="11.4" stroke="#2e2e2e" stroke-width="1"/>
</svg>
<div style="position:absolute;left:405px;top:549px;width:117px;height:20px;box-sizing:border-box;background:#cdcdcd;"></div>
<div style="position:absolute;left:405px;width:117px;text-align:center;top:554.09px;line-height:10.35px;font-size:9px;font-weight:normal;color:#3b3b3b;white-space:nowrap;">M<u>e</u>dida...</div>
<div style="position:absolute;left:582px;top:549px;width:65px;height:19px;box-sizing:border-box;background:#f2bc48;"></div>
<div style="position:absolute;left:582px;width:65px;text-align:center;top:553.59px;line-height:10.35px;font-size:9px;font-weight:normal;color:#3b3b3b;white-space:nowrap;">OK</div>
<div style="position:absolute;left:649px;top:549px;width:65px;height:19px;box-sizing:border-box;background:#cdcdcd;"></div>
<div style="position:absolute;left:649px;width:65px;text-align:center;top:553.59px;line-height:10.35px;font-size:9px;font-weight:normal;color:#3b3b3b;white-space:nowrap;">Cancelar</div>
<div style="position:absolute;left:717px;top:549px;width:65px;height:19px;box-sizing:border-box;background:#cdcdcd;"></div>
<div style="position:absolute;left:717px;width:65px;text-align:center;top:553.59px;line-height:10.35px;font-size:9px;font-weight:normal;color:#3b3b3b;white-space:nowrap;"><u>A</u>yuda</div>
<div style="position:absolute;left:0px;top:584px;width:794px;height:1px;box-sizing:border-box;background:#d8bd84;"></div>
<div style="position:absolute;left:73px;top:249px;width:45px;height:45px;border-radius:50%;background:rgba(60,170,90,0.5);"></div>
<svg style="position:absolute;left:87px;top:259px" width="18" height="26" viewBox="0 0 18 26"><path d="M1.3 1.6 L1.3 20.8 L6.1 16 L9.7 23.2 L12.1 22 L8.5 14.8 L14.5 14.8 Z" fill="#fff" stroke="#1a1a1a" stroke-width="1.2" stroke-linejoin="miter"/></svg>
</body></html>
